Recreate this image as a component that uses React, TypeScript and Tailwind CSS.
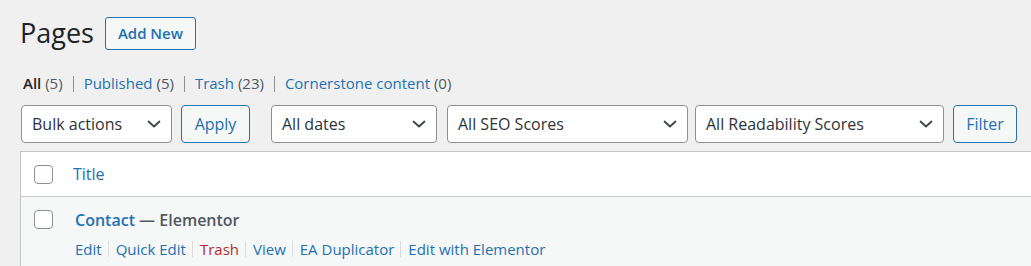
import React from "react";

const font = { fontFamily: '"Open Sans", "Noto Sans", sans-serif' };

function Chevron() {
  return (
    <svg width="14" height="8" viewBox="0 0 14 8" fill="none" className="shrink-0">
      <path d="M1.5 1.5 7 6.5l5.5-5" stroke="#3c434a" strokeWidth="1.8" strokeLinecap="round" strokeLinejoin="round" />
    </svg>
  );
}

function Select({ label, width, className = "" }: { label: string; width: string; className?: string }) {
  return (
    <div className={`flex h-[38px] items-center justify-between rounded-[4px] border border-[#8c8f94] bg-white pl-[10px] pr-[10px] text-[16px] text-[#2c3338] ${width} ${className}`}>
      <span>{label}</span>
      <Chevron />
    </div>
  );
}

function Button({ label, width, className = "" }: { label: string; width: string; className?: string }) {
  return (
    <div className={`flex h-[38px] items-center justify-center rounded-[4px] border border-[#2271b1] bg-[#f6f7f7] text-[16px] text-[#2271b1] ${width} ${className}`}>
      {label}
    </div>
  );
}

function Checkbox() {
  return <div className="h-[19px] w-[19px] shrink-0 rounded-[4px] border border-[#8c8f94] bg-white" />;
}

const views = [
  { label: "All", count: "(5)", current: true },
  { label: "Published", count: "(5)" },
  { label: "Trash", count: "(23)" },
  { label: "Cornerstone content", count: "(0)" },
];

const actions = [
  { label: "Edit" },
  { label: "Quick Edit" },
  { label: "Trash", danger: true },
  { label: "View" },
  { label: "EA Duplicator" },
  { label: "Edit with Elementor" },
];

export default function App() {
  return (
    <div className="h-[266px] w-[1031px] overflow-hidden bg-[#f0f0f1] pl-5 pt-[17px]" style={font}>
      <div className="flex h-[33px] items-center">
        <h1 className="-mt-[3px] text-[27px] leading-[33px] text-[#1d2327]">Pages</h1>
        <div className="ml-[11px] flex h-[33px] w-[91px] items-center justify-center rounded-[3px] border border-[#2271b1] bg-[#f6f7f7] text-[15px] font-semibold text-[#2271b1]">
          Add New
        </div>
      </div>

      <div className="mt-[23px] flex h-[21px] items-center pl-[3px] text-[15px] leading-[21px]">
        {views.map((v, i) => (
          <span key={v.label} className="flex items-center whitespace-pre">
            <span className={v.current ? "font-semibold text-[#1d2327]" : "text-[#2271b1]"}>{v.label}</span>
            <span className="text-[#50575e]"> {v.count}</span>
            {i < views.length - 1 && <span className="mx-[10px] inline-block h-[16px] w-px bg-[#8c8f94]" />}
          </span>
        ))}
      </div>

      <div className="mt-[11px] flex items-center pl-px">
        <Select label="Bulk actions" width="w-[151px]" />
        <Button label="Apply" width="w-[69px]" className="ml-[9px]" />
        <Select label="All dates" width="w-[166px]" className="ml-[21px]" />
        <Select label="All SEO Scores" width="w-[241px]" className="ml-[10px]" />
        <Select label="All Readability Scores" width="w-[249px]" className="ml-[7px]" />
        <Button label="Filter" width="w-[64px]" className="ml-[9px]" />
      </div>

      <div className="mt-[8px] w-[1020px] border border-r-0 border-[#c3c4c7] bg-white">
        <div className="flex h-[45px] items-center border-b border-[#c3c4c7] pl-[13px]">
          <Checkbox />
          <span className="ml-[20px] text-[16px] text-[#2271b1]">Title</span>
        </div>
        <div className="flex h-[70px] bg-[#f6f7f7] pl-[13px] pt-[13px]">
          <Checkbox />
          <div className="ml-[22px] -mt-[2px]">
            <div className="text-[16px] font-semibold leading-[24px]">
              <span className="text-[#2271b1]">Contact</span>
              <span className="text-[#50575e]"> — Elementor</span>
            </div>
            <div className="mt-[7px] flex items-center text-[15px] leading-[20px]">
              {actions.map((a, i) => (
                <span key={a.label} className="flex items-center">
                  <span className={a.danger ? "text-[#b32d2e]" : "text-[#2271b1]"}>{a.label}</span>
                  {i < actions.length - 1 && <span className="ml-[6px] mr-[7px] inline-block h-[16px] w-px bg-[#dcdcde]" />}
                </span>
              ))}
            </div>
          </div>
        </div>
      </div>
    </div>
  );
}
